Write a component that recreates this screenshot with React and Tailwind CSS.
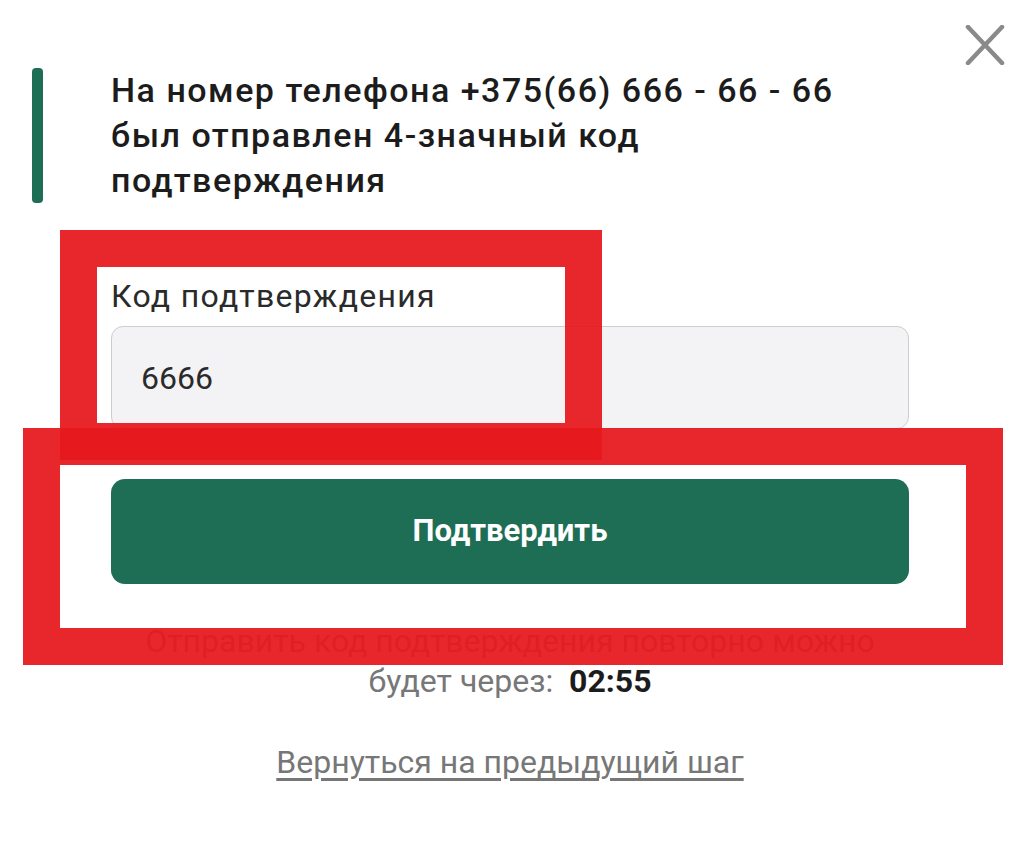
import React, { useState } from "react";

// Phone confirmation step — code input, confirm button, resend timer.
// The two red frames are annotation overlays drawn over the form.

const FONT = { fontFamily: "Roboto, 'Noto Sans', Arial, sans-serif" };

function CloseButton() {
  return (
    <button
      type="button"
      aria-label="Закрыть"
      className="absolute left-[964px] top-[24px] w-[42px] h-[42px] flex items-center justify-center"
    >
      <svg width="40" height="40" viewBox="0 0 40 40" fill="none">
        <path
          d="M3 2 L37 38 M37 2 L3 38"
          stroke="#8a8a8a"
          strokeWidth="4.5"
          strokeLinecap="round"
        />
      </svg>
    </button>
  );
}

function Frame({ className }) {
  return (
    <div
      className={`absolute pointer-events-none border-[37px] border-[rgba(230,26,30,0.94)] ${className}`}
    />
  );
}

export default function App() {
  const [code, setCode] = useState("6666");

  return (
    <div className="relative w-full min-h-screen bg-white overflow-hidden" style={FONT}>
      <CloseButton />

      <div className="flex pt-[68px] pl-[32px]">
        <div className="w-[11px] shrink-0 rounded-[4px] bg-[#1e6e56]" />
        <h1 className="ml-[68px] text-[34px] leading-[45px] font-medium tracking-[1.5px] text-[#1c1c1c]">
          На номер телефона +375(66) 666 - 66 - 66
          <br />
          был отправлен 4-значный код
          <br />
          подтверждения
        </h1>
      </div>

      <div className="ml-[111px] w-[798px] flex flex-col">
        <label className="mt-[75px] text-[32px] leading-[36px] tracking-[1.3px] text-[#2a2a2a]">
          Код подтверждения
        </label>
        <input
          value={code}
          onChange={(e) => setCode(e.target.value)}
          className="mt-[12px] h-[103px] px-[29px] rounded-[12px] border border-[#cdcdcd] bg-[#f3f2f4] text-[32px] text-[#2a2a2a] outline-none"
        />
        <button
          type="button"
          className="mt-[50px] h-[105px] rounded-[14px] bg-[#1e6e56] text-white text-[31px] font-bold"
        >
          Подтвердить
        </button>

        <div className="mt-[37px] text-center text-[32px] leading-[40px] text-[#777777]">
          Отправить код подтверждения повторно можно
          <br />
          будет через:&nbsp; <span className="font-bold text-[#1c1c1c]">02:55</span>
        </div>

        <div className="mt-[41px] text-center">
          <a href="#" className="text-[32px] leading-[40px] text-[#777777] underline underline-offset-[5px]">
            Вернуться на предыдущий шаг
          </a>
        </div>
      </div>

      <Frame className="left-[60px] top-[230px] w-[542px] h-[230px]" />
      <Frame className="left-[23px] top-[428px] w-[980px] h-[237px]" />
    </div>
  );
}
